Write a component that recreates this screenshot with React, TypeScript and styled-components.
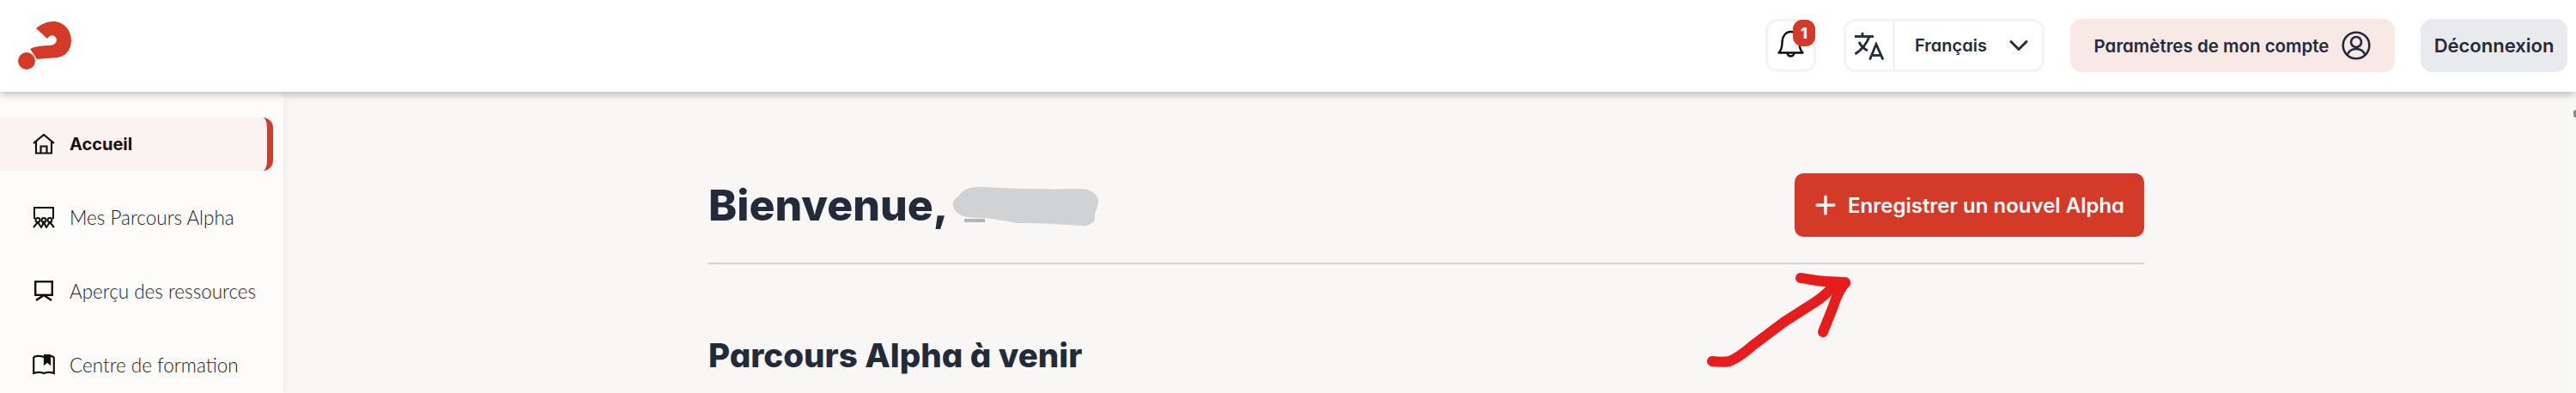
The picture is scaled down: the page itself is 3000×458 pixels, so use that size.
import React from 'react';
import styled, { createGlobalStyle } from 'styled-components';
import { Plus, ChevronDown } from 'lucide-react';

const GlobalStyle = createGlobalStyle`
  html, body {
    margin: 0;
    padding: 0;
    width: 3000px;
    height: 458px;
    overflow: hidden;
    background: #f8f7f5;
    font-family: "Inter", "Liberation Sans", sans-serif;
    font-feature-settings: "cv11";
  }
  * { box-sizing: border-box; }
`;

const Page = styled.div`
  display: flex;
  flex-direction: column;
  width: 3000px;
  height: 458px;
  overflow: hidden;
`;

const TopBar = styled.header`
  position: relative;
  z-index: 2;
  flex: 0 0 107px;
  display: flex;
  align-items: center;
  justify-content: space-between;
  padding: 0 10px 1px 21px;
  background: #fff;
  box-shadow: 0 2px 10px rgba(0, 0, 0, 0.3);
`;

const TopActions = styled.div`
  display: flex;
  align-items: center;
  gap: 30px;
`;

const BellBox = styled.div`
  position: relative;
  display: flex;
  align-items: center;
  justify-content: center;
  width: 59px;
  height: 62px;
  margin-right: 2px;
  padding-bottom: 4px;
  border: 3px solid #f3f3f3;
  border-radius: 14px;
`;

const Badge = styled.span`
  position: absolute;
  top: -2px;
  right: -2px;
  display: flex;
  align-items: center;
  justify-content: center;
  width: 26px;
  height: 31px;
  border-radius: 11px;
  background: #d33a28;
  color: #fff;
  font-size: 18px;
  font-weight: 800;
`;

const LangBox = styled.div`
  display: flex;
  width: 234px;
  height: 62px;
  border: 3px solid #f3f3f3;
  border-radius: 14px;
`;

const LangIcon = styled.div`
  flex: 0 0 57px;
  display: flex;
  align-items: center;
  justify-content: center;
  border-right: 3px solid #f3f3f3;
`;

const LangLabel = styled.div`
  flex: 1;
  display: flex;
  align-items: center;
  gap: 19px;
  padding-left: 23px;
  color: #232b3b;
  font-size: 20px;
  font-weight: 600;
`;

const PillButton = styled.button<{ $bg: string; $width: number; $size: number }>`
  display: flex;
  align-items: center;
  justify-content: center;
  gap: 15px;
  width: ${({ $width }) => $width}px;
  height: 62px;
  padding: 0;
  border: 0;
  border-radius: 14px;
  background: ${({ $bg }) => $bg};
  color: #232b3b;
  font-family: inherit;
  font-feature-settings: inherit;
  font-size: ${({ $size }) => $size}px;
  font-weight: 600;
  white-space: nowrap;
`;

const Body = styled.div`
  flex: 1;
  display: flex;
  min-height: 0;
`;

const Sidebar = styled.nav`
  flex: 0 0 330px;
  display: flex;
  flex-direction: column;
  gap: 24px;
  padding: 30px 12px 0 0;
  background: #fdfcfb;
  box-shadow: 2px 0 6px rgba(0, 0, 0, 0.03);
`;

const NavItem = styled.a<{ $active?: boolean }>`
  flex: 0 0 62px;
  display: flex;
  align-items: center;
  gap: 17px;
  padding-left: 38px;
  padding-bottom: ${({ $active }) => ($active ? '0' : '2px')};
  border-radius: 0 12px 12px 0;
  border-right: ${({ $active }) => ($active ? '7px solid #d33a28' : '0')};
  background: ${({ $active }) => ($active ? '#fbf3f2' : 'transparent')};
  color: ${({ $active }) => ($active ? '#111' : '#222')};
  font-family: ${({ $active }) => ($active ? '"Inter"' : '"Lato"')}, sans-serif;
  font-size: ${({ $active }) => ($active ? '20px' : '22.500px')};
  font-weight: ${({ $active }) => ($active ? 700 : 300)};
  white-space: nowrap;
`;

const NavIcon = styled.span`
  flex: 0 0 26px;
  display: flex;
  align-items: center;
  justify-content: center;
`;

const Main = styled.main`
  position: relative;
  flex: 1;
  padding: 95px 495px 0 495px;
`;

const ScrollTrack = styled.div`
  flex: 0 0 8px;
  display: flex;
  justify-content: flex-end;
  padding-top: 21px;
  background: #f9f9f8;
`;

const ScrollArrow = styled.span`
  width: 3px;
  height: 9px;
  border-radius: 3px 0 0 3px;
  background: #8a8a8a;
`;

const Heading = styled.div`
  display: flex;
  align-items: center;
  justify-content: space-between;
  padding-bottom: 30px;
  border-bottom: 2px solid #d3d2cf;
`;

const Title = styled.h1`
  position: relative;
  margin: 0;
  color: #232b3b;
  font-size: 50px;
  font-weight: 800;
  line-height: 74px;
`;

const Redaction = styled.svg`
  position: absolute;
  top: 15px;
  left: 283px;
  width: 172px;
  height: 48px;
`;

const PrimaryButton = styled.button`
  display: flex;
  align-items: center;
  gap: 9px;
  width: 407px;
  height: 74px;
  padding: 0 0 0 19px;
  border: 0;
  border-radius: 10px;
  background: #d33a28;
  color: #fff;
  font-family: inherit;
  font-feature-settings: inherit;
  font-size: 24px;
  font-weight: 600;
  white-space: nowrap;
`;

const SubTitle = styled.h2`
  margin: 83px 0 0;
  color: #232b3b;
  font-size: 38.500px;
  font-weight: 800;
`;

const ArrowMark = styled.svg`
  position: absolute;
  top: 210px;
  left: 1657px;
  width: 170px;
  height: 115px;
`;

const Logo = () => (
  <svg width="62" height="56" viewBox="0 0 62 56">
    <path
      fill="#d33a28"
      d="M21 8C27 3 34 0 41 0C53 0 62 10 62 22C62 33 55 41 46 42L22 44L14 32C20 29 28 28 36 28C42 28 45 25 45 21C44 17 40 15 37 17L34 20Z"
    />
    <circle fill="#d33a28" cx="10" cy="46" r="10" />
  </svg>
);

const IconHome = () => (
  <svg width="26" height="24" viewBox="0 0 26 24" fill="none" stroke="#111" strokeWidth="2.2">
    <path d="M1 11 13 1l12 10" />
    <path d="M4 9v13.500h18V9" />
    <path d="M9.500 22.500v-8h7v8" />
  </svg>
);

const IconClassroom = () => (
  <svg width="26" height="25" viewBox="0 0 26 25" fill="none" stroke="#111" strokeWidth="2">
    <path d="M2 14V1h22v13" />
    <path d="M1 1h24" />
    <circle cx="6" cy="15.500" r="2.500" />
    <circle cx="13" cy="15.500" r="2.500" />
    <circle cx="20" cy="15.500" r="2.500" />
    <path d="M1 24l5-6 4 6 3-6 3 6 4-6 5 6" />
  </svg>
);

const IconBoard = () => (
  <svg width="22" height="24" viewBox="0 0 22 24" fill="none" stroke="#111" strokeWidth="2.4">
    <rect x="1.200" y="1.200" width="19.600" height="15.600" />
    <path d="M2 23l9-6 9 6" />
  </svg>
);

const IconBook = () => (
  <svg width="26" height="24" viewBox="0 0 26 24" fill="none" stroke="#111" strokeWidth="2.2">
    <path d="M1.200 3v19c4-1.500 8-1.500 11.800 0 3.800-1.500 7.800-1.500 11.800 0V3" />
    <path d="M1.200 3C5 1.500 9 1.500 13 3c3.800-1.500 7.800-1.500 11.800 0" />
    <path fill="#111" d="M14 1h6v10l-3-2.500L14 11z" />
  </svg>
);

const IconBell = () => (
  <svg width="31" height="32" viewBox="0 0 31 32" fill="none" stroke="#0d0d0d" strokeWidth="2.400" strokeLinejoin="round">
    <path d="M1.500 26.500c3-3 4-6 4-12 0-7 4-12.500 10-12.500s10 5.500 10 12.500c0 6 1 9 4 12z" />
    <path d="M11.500 26.500a4 4 0 0 0 8 0" />
  </svg>
);

const IconTranslate = () => (
  <svg width="36" height="33" viewBox="0 0 36 33" fill="none" stroke="#232b3b" strokeWidth="2.800">
    <path d="M1 5.500h22" />
    <path d="M10 1v4.500" />
    <path d="M18 5.500C15 14 9 21 1.500 26" />
    <path d="M6 12c2 4 6 8 10 10" />
    <path d="M18.500 32.500 26 14.500l8 18" />
    <path d="M20.500 27.500h11" />
  </svg>
);

const IconAccount = () => (
  <svg width="34" height="34" viewBox="0 0 34 34" fill="none" stroke="#232b3b" strokeWidth="2.600">
    <circle cx="17" cy="17" r="15.300" />
    <circle cx="17" cy="13" r="6" />
    <path d="M6.500 28c2-5 6-7 10.500-7s8.500 2 10.500 7" />
  </svg>
);

const App: React.FC = () => {
  return (
    <Page>
      <GlobalStyle />
      <TopBar>
        <Logo />
        <TopActions>
          <BellBox>
            <IconBell />
            <Badge>1</Badge>
          </BellBox>
          <LangBox>
            <LangIcon>
              <IconTranslate />
            </LangIcon>
            <LangLabel>
              Français
              <ChevronDown size={36} strokeWidth={2} color="#232b3b" />
            </LangLabel>
          </LangBox>
          <PillButton $bg="#f9e9e6" $width={378} $size={20.5}>
            Paramètres de mon compte
            <IconAccount />
          </PillButton>
          <PillButton $bg="#e9eaee" $width={171} $size={22}>
            Déconnexion
          </PillButton>
        </TopActions>
      </TopBar>
      <Body>
        <Sidebar>
          <NavItem $active>
            <NavIcon>
              <IconHome />
            </NavIcon>
            Accueil
          </NavItem>
          <NavItem>
            <NavIcon>
              <IconClassroom />
            </NavIcon>
            Mes Parcours Alpha
          </NavItem>
          <NavItem>
            <NavIcon>
              <IconBoard />
            </NavIcon>
            Aperçu des ressources
          </NavItem>
          <NavItem>
            <NavIcon>
              <IconBook />
            </NavIcon>
            Centre de formation
          </NavItem>
        </Sidebar>
        <Main>
          <Heading>
            <Title>
              Bienvenue,
              <Redaction viewBox="0 0 172 48">
                <path fill="#b4b5b8" d="M15 38h24v4H15z" />
                <path
                  fill="#d1d2d4"
                  d="M8 12C14 2 24 0 40 1c30 2 70 3 110 2 14 0 22 8 21 16-1 8-4 10-4 18 0 6-8 10-16 9-30-2-50-3-70-3-14 0-26-6-50-6C16 37 4 33 2 23 1 18 4 14 8 12z"
                />
              </Redaction>
            </Title>
            <PrimaryButton>
              <Plus size={34} strokeWidth={2.400} />
              Enregistrer un nouvel Alpha
            </PrimaryButton>
          </Heading>
          <SubTitle>Parcours Alpha à venir</SubTitle>
          <ArrowMark viewBox="0 0 170 115" fill="none" stroke="#e71d1d" strokeWidth="12" strokeLinecap="round" strokeLinejoin="round">
            <path d="M7 104c8 1 15 1 20 0 10-4 20-12 28-19l36-27 36-23c8-5 13-10 18-15l17-7" />
            <path d="M110 7c10 1 20 4 31 4l21 1c-6 8-11 18-14 28-4 10-8 20-12 30" />
          </ArrowMark>
        </Main>
        <ScrollTrack>
          <ScrollArrow />
        </ScrollTrack>
      </Body>
    </Page>
  );
};

export default App;
